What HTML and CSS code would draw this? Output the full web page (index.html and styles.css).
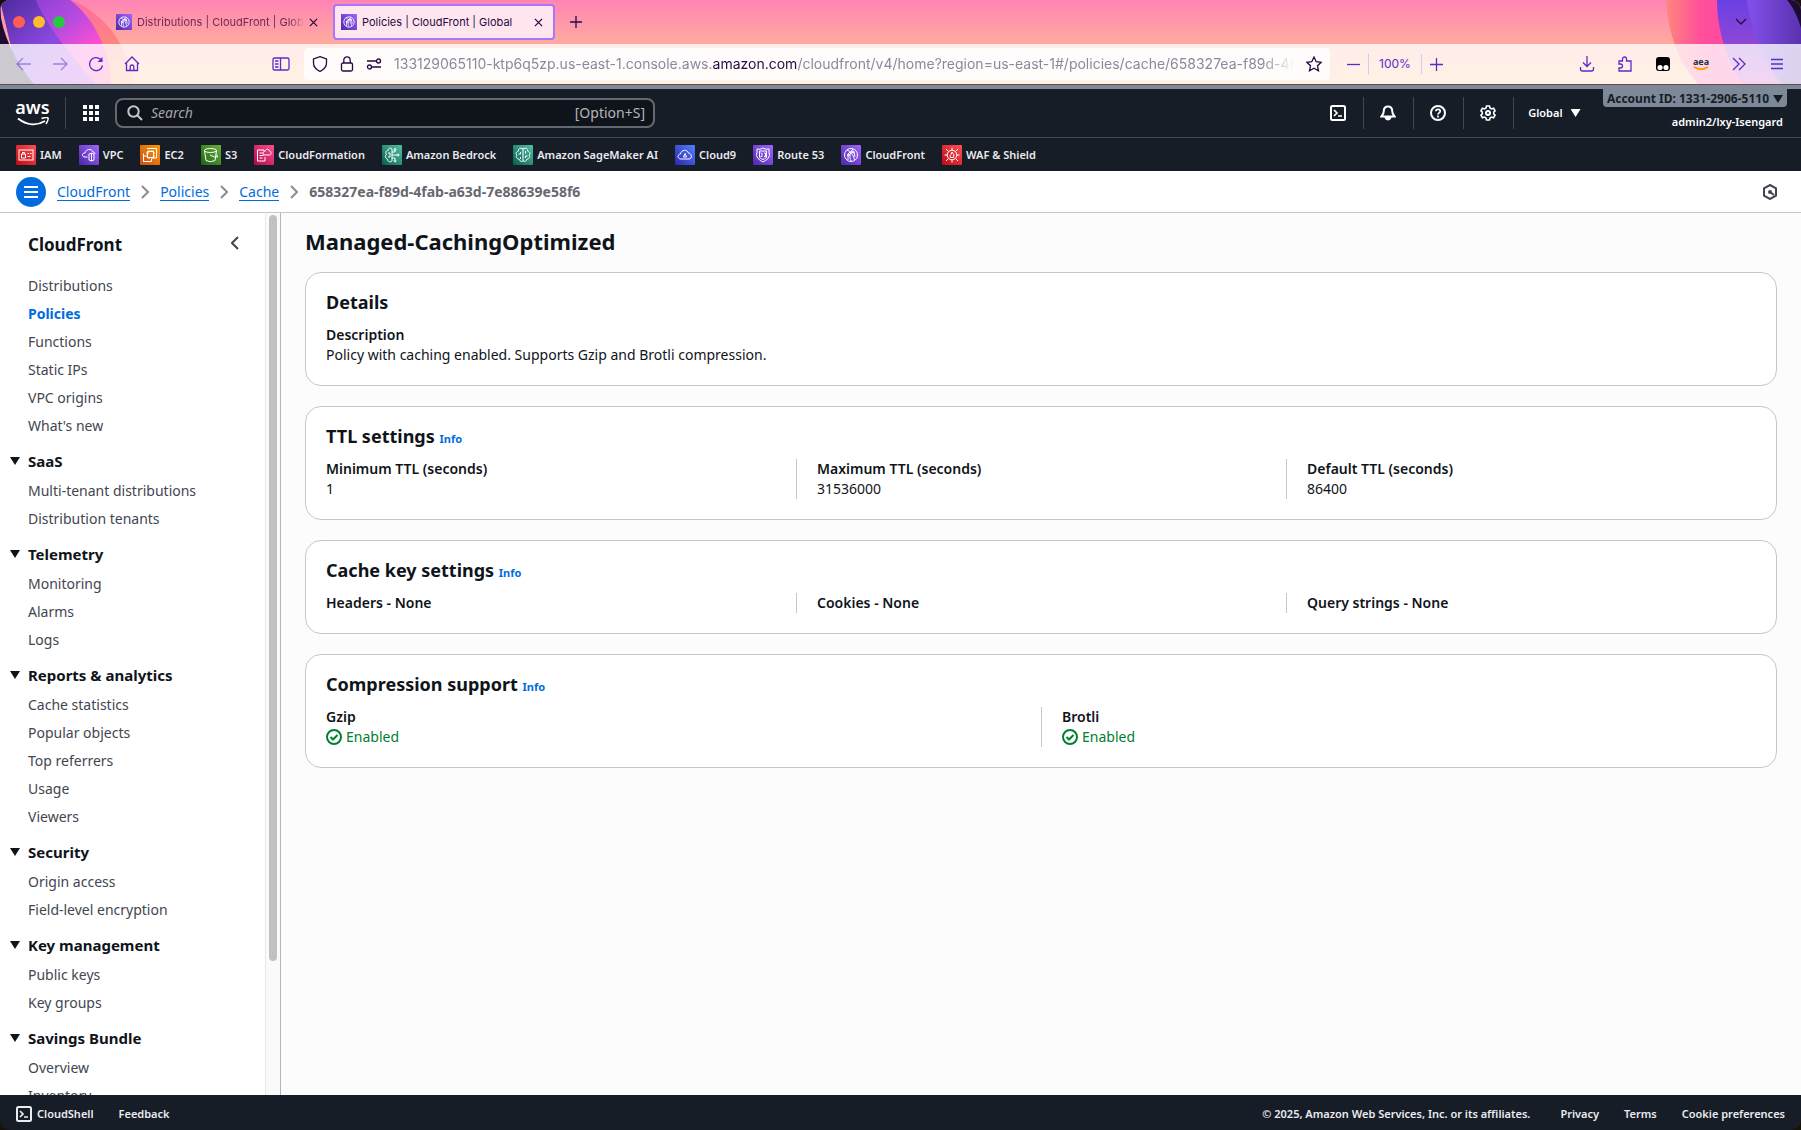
FILE: index.html
```html
<!DOCTYPE html>
<html lang="en">
<head>
    <meta charset="utf-8">
    <title>Policies | CloudFront | Global</title>
    <link rel="stylesheet" href="styles.css">
</head>
<body>

<!-- shared icons -->
<svg class="defs" aria-hidden="true">
    <symbol id="i-cloudfront" viewBox="0 0 20 20">
        <g fill="none" stroke="#fff" stroke-width="1"><circle cx="10" cy="10" r="6.5"/><path d="M6 5c3 1 6 4 7.500 10M7 15V9l2-2M12 4c-3 3-4 8-2 12M9 7h4l1 5"/><circle cx="12" cy="7" r="1"/><circle cx="7.500" cy="10" r="1"/></g>
    </symbol>
    <symbol id="i-close" viewBox="0 0 10 10"><path d="M1 1l8 8M9 1l-8 8" stroke="#250a45" stroke-width="1.400" fill="none"/></symbol>
    <symbol id="i-shell" viewBox="0 0 16 16"><g fill="none" stroke="currentColor" stroke-width="2"><rect x="1" y="1" width="14" height="14" rx="1.500"/><path d="M4 5l3 3-3 3M8 11h4" stroke-width="1.700"/></g></symbol>
    <symbol id="i-chevron" viewBox="0 0 8 14"><path d="M1 1l6 6-6 6" fill="none" stroke="#8c8c94" stroke-width="2"/></symbol>
    <symbol id="i-ok" viewBox="0 0 16 16"><g fill="none" stroke="#00802f" stroke-width="2"><circle cx="8" cy="8" r="7"/><path d="M4.500 8l2.500 2.500 4.500-4.500"/></g></symbol>
</svg>

<div class="window">
    <div class="browser">
        <svg class="theme theme-left" viewBox="0 0 150 84" aria-hidden="true">
            <defs>
                <linearGradient id="g1" x1="0" y1="0" x2="1" y2="1"><stop offset="0" stop-color="#4c2a9c"/><stop offset=".5" stop-color="#8a49e0"/><stop offset="1" stop-color="#c43fe8"/></linearGradient>
                <linearGradient id="g2" x1="0" y1="0" x2="1" y2="1"><stop offset="0" stop-color="#7a3ad0"/><stop offset=".45" stop-color="#b94be0"/><stop offset=".7" stop-color="#ff4fd0"/><stop offset="1" stop-color="#ff5f9a"/></linearGradient>
                <linearGradient id="g3" x1="0" y1="0" x2="0" y2="1"><stop offset="0" stop-color="#ff6aa5"/><stop offset=".6" stop-color="#ff8a78"/><stop offset="1" stop-color="#ffb070"/></linearGradient>
            </defs>
            <path d="M60 0h12c32 14 56 44 62 84H90z" fill="url(#g3)"/>
            <path d="M0 0h70c24 18 40 50 41 84H20z" fill="url(#g2)"/>
            <path d="M0 0h36c8 22 38 60 60 84H20z" fill="url(#g1)"/>
            <path d="M0 0v84h34C20 68 6 44 1 18z" fill="#1c0d30"/>
        </svg>
        <svg class="theme theme-right" viewBox="0 0 150 84" aria-hidden="true">
            <defs>
                <linearGradient id="g4"><stop offset="0" stop-color="#ff867c"/><stop offset=".45" stop-color="#ff4f9c"/><stop offset="1" stop-color="#ff45a2"/></linearGradient>
                <linearGradient id="g5" x1="0" y1="0" x2="0" y2="1"><stop offset="0" stop-color="#6a40e4"/><stop offset=".6" stop-color="#9448d4"/><stop offset="1" stop-color="#c944c8"/></linearGradient>
                <linearGradient id="g6"><stop offset="0" stop-color="#8350ea"/><stop offset="1" stop-color="#5a32b0"/></linearGradient>
            </defs>
            <path d="M15 0c2 32 12 62 32 84h45V0z" fill="url(#g4)"/>
            <path d="M66 0c0 30 10 62 26 84h58V0z" fill="url(#g5)"/>
            <path d="M96 0c4 32 18 62 34 84h20V0z" fill="url(#g6)"/>
            <path d="M136 0c6 7 11 17 14 28V0z" fill="#1c0d30"/>
        </svg>

        <div class="tabs">
            <div class="lights"><span class="light red"></span><span class="light yellow"></span><span class="light green"></span></div>
            <div class="tab">
                <svg class="favicon"><use href="#i-cloudfront"/></svg>
                <span class="tab-title">Distributions | CloudFront | Glob</span>
                <button class="tab-close" aria-label="Close tab"><svg width="9" height="9"><use href="#i-close"/></svg></button>
            </div>
            <div class="tab active">
                <svg class="favicon"><use href="#i-cloudfront"/></svg>
                <span class="tab-title">Policies | CloudFront | Global</span>
                <button class="tab-close" aria-label="Close tab"><svg width="9" height="9"><use href="#i-close"/></svg></button>
            </div>
            <button class="new-tab" aria-label="New tab"><svg width="12" height="12" viewBox="0 0 12 12"><path d="M6 0v12M0 6h12" stroke="#250a45" stroke-width="1.300"/></svg></button>
            <button class="all-tabs" aria-label="List all tabs"><svg width="12" height="8" viewBox="0 0 12 8"><path d="M1 1l5 5 5-5" fill="none" stroke="#250a45" stroke-width="1.300"/></svg></button>
        </div>

        <div class="toolbar">
            <div class="nav-buttons">
                <button class="dim" aria-label="Back"><svg width="16" height="16" viewBox="0 0 16 16"><path d="M15 8H1M7 2L1 8l6 6"/></svg></button>
                <button class="dim" aria-label="Forward"><svg width="16" height="16" viewBox="0 0 16 16"><path d="M1 8h14M9 2l6 6-6 6"/></svg></button>
                <button aria-label="Reload"><svg width="16" height="16" viewBox="0 0 16 16"><path d="M14.500 9.500A6.500 6.500 0 1 1 12.500 3.300L14 5"/><path d="M14.500 1v5h-5z" fill="#5b2bc9" stroke="none"/></svg></button>
                <button aria-label="Home"><svg width="16" height="16" viewBox="0 0 16 16"><path d="M1 8l7-7 7 7M2.500 7v7.500h11V7M6.200 14.500V11q0-2 1.800-2t1.800 2v3.500"/></svg></button>
            </div>
            <button class="reader" aria-label="Sidebar"><svg width="18" height="14" viewBox="0 0 18 14"><rect x="1" y="1" width="16" height="12" rx="1.500"/><path d="M8.500 1v12M3 4h3.500M3 7h3.500M3 10h3.500"/></svg></button>
            <div class="urlbar">
                <svg width="16" height="16" viewBox="0 0 16 16"><path d="M8 .7l6.500 2.300v4c0 4-3.500 7-6.500 8.500C5 14 1.500 11 1.500 7V3z"/></svg>
                <svg width="14" height="16" viewBox="0 0 14 16"><rect x="1.500" y="7" width="11" height="8" rx="1.500"/><path d="M3.800 7V4a3.200 3.200 0 0 1 6.400 0v3"/></svg>
                <svg width="16" height="14" viewBox="0 0 16 14"><path d="M1 4h9M6 10h9"/><circle cx="12.500" cy="4" r="2"/><circle cx="3.500" cy="10" r="2"/></svg>
                <div class="url" role="textbox" aria-label="Address">133129065110-ktp6q5zp.us-east-1.console.aws.<span class="domain">amazon.com</span>/cloudfront/v4/home?region=us-east-1#/policies/cache/658327ea-f89d-4fab-a6</div>
                <button aria-label="Bookmark"><svg width="16" height="16" viewBox="0 0 16 16"><path d="M8 1l2.200 4.700 5 .6-3.700 3.500 1 5L8 12.300l-4.500 2.500 1-5L.8 6.300l5-.6z"/></svg></button>
            </div>
            <div class="zoom">
                <button aria-label="Zoom out"><svg width="13" height="13" viewBox="0 0 13 13"><path d="M0 6.500h13"/></svg></button>
                <span class="zoom-level">100%</span>
                <button aria-label="Zoom in"><svg width="13" height="13" viewBox="0 0 13 13"><path d="M0 6.500h13M6.500 0v13"/></svg></button>
            </div>
            <div class="extensions">
                <button aria-label="Downloads"><svg width="16" height="16" viewBox="0 0 16 16"><path d="M8 0v10M4 6.500l4 4 4-4M1.500 11v2q0 2 2 2h9q2 0 2-2v-2"/></svg></button>
                <button aria-label="Extensions"><svg width="16" height="16" viewBox="0 0 16 16"><path d="M2 8V5h3.500V3a2 2 0 0 1 4 0v2h4.500v10H2v-3h1.500a2 2 0 0 0 0-4z"/></svg></button>
                <button aria-label="Tampermonkey"><svg width="16" height="16" viewBox="0 0 16 16"><rect x="1" y="1" width="14" height="14" rx="3" fill="#000" stroke="none"/><circle cx="5" cy="11.500" r="2.600" fill="#fff" stroke="none"/><circle cx="11" cy="11.500" r="2.600" fill="#fff" stroke="none"/></svg></button>
                <button class="aea" aria-label="AEA"><span>aea</span><svg width="16" height="5" viewBox="0 0 16 5"><path class="smile" d="M1 1q7 4.500 14 0"/></svg></button>
                <button aria-label="More tools"><svg width="14" height="14" viewBox="0 0 14 14"><path d="M1 1l6 6-6 6M7 1l6 6-6 6"/></svg></button>
                <button aria-label="Menu"><svg width="14" height="12" viewBox="0 0 14 12"><path d="M1 1.500h12M1 6h12M1 10.500h12"/></svg></button>
            </div>
        </div>
    </div>

    <header class="aws-header">
        <a class="logo" href="#" aria-label="AWS home">
            <span>aws</span>
            <svg width="32" height="9" viewBox="0 0 32 9"><path d="M1 1.500C10 8.500 20 8.800 28 4" fill="none" stroke="#fff" stroke-width="2"/><path d="M24.500 1.500Q30-.2 31 1q.8 1.500-2 6" fill="none" stroke="#fff" stroke-width="1.500"/></svg>
        </a>
        <button class="services" aria-label="Services"><svg width="16" height="16" viewBox="0 0 16 16" fill="#fff"><path d="M0 0h4v4H0zM6 0h4v4H6zM12 0h4v4h-4zM0 6h4v4H0zM6 6h4v4H6zM12 6h4v4h-4zM0 12h4v4H0zM6 12h4v4H6zM12 12h4v4h-4z"/></svg></button>
        <label class="search">
            <svg width="16" height="16" viewBox="0 0 16 16"><g fill="none" stroke="#c6c6cd" stroke-width="2"><circle cx="6.500" cy="6.500" r="5.200"/><path d="M10.500 10.500l4.500 4.500"/></g></svg>
            <input type="text" placeholder="Search" aria-label="Search">
            <span class="shortcut">[Option+S]</span>
        </label>
        <div class="tools">
            <button aria-label="CloudShell"><svg width="16" height="16"><use href="#i-shell"/></svg></button>
            <button aria-label="Notifications"><svg width="16" height="16" viewBox="0 0 16 16"><path d="M8 1.500c-3 0-4.200 2-4.200 4.500 0 2.700-.8 3.700-2.300 5.500h13c-1.500-1.800-2.300-2.800-2.300-5.500 0-2.500-1.200-4.500-4.200-4.500z"/><path d="M5.500 12.500a2.600 2.600 0 0 0 5 0z" fill="#fff"/></svg></button>
            <button aria-label="Help"><svg width="16" height="16" viewBox="0 0 16 16"><circle cx="8" cy="8" r="7"/><path d="M5.800 6.300C6 3.500 10.200 3.800 10.200 6.200 10.200 8 8 7.700 8 9.500M8 10.500v2" stroke-width="1.700"/></svg></button>
            <button aria-label="Settings"><svg width="16" height="16" viewBox="0 0 16 16"><path d="M6.500 1h3l.5 2 1.600.9 2-.6 1.500 2.500-1.400 1.400v1.600l1.400 1.400-1.500 2.500-2-.6-1.600.9-.5 2h-3L6 13l-1.600-.9-2 .6L.9 10.200l1.400-1.400V7.200L.9 5.800l1.500-2.500 2 .6L6 3z" stroke-width="1.600"/><circle cx="8" cy="8" r="2"/></svg></button>
            <button class="region">Global <span class="caret"></span></button>
        </div>
        <div class="account">
            <button class="account-id">Account ID: 1331-2906-5110 <span class="caret"></span></button>
            <span class="user">admin2/lxy-Isengard</span>
        </div>
    </header>

    <nav class="favorites" aria-label="Favorites">
        <a href="#"><svg class="svc red" viewBox="0 0 20 20"><rect x="3" y="5" width="14" height="10"/><path d="M5.500 9h4v4h-4zM6.500 9V7.500h2V9M11.500 8.500h1.500M14 8.500h1.500M11.500 11.500h3"/></svg>IAM</a>
        <a href="#"><svg class="svc purple" viewBox="0 0 20 20"><path d="M8.500 12H6c-3.500 0-3.500-4 0-4 .5-4 6.500-5 8-1 1.500 0 2 1 2 2M10 9q2.500-1.500 5 0v6q-2.500 2-5 0zM12.500 8.500v7.500"/></svg>VPC</a>
        <a href="#"><svg class="svc orange" viewBox="0 0 20 20"><path d="M8 9V6M7 3.500h9.500V13H13M3.500 11H6M3.500 8.500v8h8V14"/><rect x="7.500" y="6.500" width="6" height="6"/><path d="M9 5v1.500M12 5v1.500M9 12.500V14M12 12.500V14M6 8h1.500M6 11h1.500M13.500 8H15M13.500 11H15"/></svg>EC2</a>
        <a href="#"><svg class="svc green" viewBox="0 0 20 20"><ellipse cx="9.500" cy="5.500" rx="6" ry="2"/><path d="M3.500 5.500l1.500 10q4.500 2.500 9 0l1.500-10M9 10q5 3 7.500 2 .5-1.500-1.500-2.500"/></svg>S3</a>
        <a href="#"><svg class="svc pink" viewBox="0 0 20 20"><path d="M10 6V5H3.500v11H11v-4M5.500 8h3M5.500 10.500h4M5.500 13h3M10 10c-2-2-.5-4 1-3.500.5-3 4-3 4.500-.5 2.500.5 2 4 0 4z"/></svg>CloudFormation</a>
        <a href="#"><svg class="svc teal" viewBox="0 0 20 20"><path d="M10 4v12c-2 2-5 0-4.500-2-2.500-.5-2.500-4-1-4.500C3 8 4 5.500 6 5.500 6 3 9 2.500 10 4zM6 8h2v4H6M10 7h3V5M10 10h5M10 13h3v2"/><circle cx="13" cy="4.500" r="1"/><circle cx="16" cy="10" r="1"/><circle cx="13" cy="16" r="1"/></svg>Amazon Bedrock</a>
        <a href="#"><svg class="svc teal" viewBox="0 0 20 20"><path d="M10 4v12M10 4c3-2 5 0 4.500 2 3 1 3 3 1.500 4 1.500 2 0 4-2 4-1 3-3 2.500-4 2-1 .5-3 1-4-2-2 0-3.500-2-2-4-1.500-1-1.500-3 1.500-4C5 4 7 2 10 4zM5.500 9h2V7M14.500 11h-2v2M12.500 6v2.500M7.500 14v-2"/></svg>Amazon SageMaker AI</a>
        <a href="#"><svg class="svc blue" viewBox="0 0 20 20"><path d="M6 14c-4 0-3.500-5-.5-5 .5-4.500 7-5 8-.8 3.500 0 4 5.800.5 5.800zM10 8.500L8.500 12h3z"/></svg>Cloud9</a>
        <a href="#"><svg class="svc purple" viewBox="0 0 20 20"><path d="M4 4q3 1 6-1 3 2 6 1v3q1.500 4-1 6.500-2 2-5 3.500-3-1.500-5-3.500Q2.500 11 4 7z"/><path d="M6.500 6h7v6.500q-3 2-3.500 2-.5 0-3.500-2zM8.500 8H7.500M9 8v3.500H7.500M11 8h1.500v3.500H11"/></svg>Route 53</a>
        <a href="#"><svg class="svc purple"><use href="#i-cloudfront"/></svg>CloudFront</a>
        <a href="#"><svg class="svc red" viewBox="0 0 20 20"><circle cx="10" cy="10" r="4.800"/><path d="M10 2.500v3M10 14.500v3M2.500 10h3M14.500 10h3M4 4l2.500 2.500M16 4l-2.500 2.500M4 16l2.500-2.500M16 16l-2.500-2.500M10 7q3 3 1.500 5.500h-3Q7.500 10 9 9.500z"/></svg>WAF &amp; Shield</a>
    </nav>

    <div class="breadcrumbs">
        <button class="menu-toggle" aria-label="Open navigation"><svg width="14" height="14" viewBox="0 0 14 14"><path d="M0 2h14M0 7h14M0 12h14" stroke="#fff" stroke-width="2"/></svg></button>
        <a href="#">CloudFront</a>
        <svg class="sep"><use href="#i-chevron"/></svg>
        <a href="#">Policies</a>
        <svg class="sep"><use href="#i-chevron"/></svg>
        <a href="#">Cache</a>
        <svg class="sep"><use href="#i-chevron"/></svg>
        <span class="current">658327ea-f89d-4fab-a63d-7e88639e58f6</span>
        <button class="assistant" aria-label="Assistant"><svg width="16" height="16" viewBox="0 0 16 16"><path d="M8 1l6 3.300v7.400L8 15l-6-3.300V4.300z" fill="none" stroke="#424650" stroke-width="2"/><path d="M8 8l4 3" stroke="#424650" stroke-width="2"/><circle cx="8" cy="8" r="2" fill="#424650"/></svg></button>
    </div>

    <div class="content">
        <aside class="sidebar">
            <div class="sidebar-scroll">
                <div class="sidebar-head">
                    <h2>CloudFront</h2>
                    <button aria-label="Close navigation"><svg width="8" height="14" viewBox="0 0 8 14"><path d="M7 1L1 7l6 6" fill="none" stroke="#424650" stroke-width="2"/></svg></button>
                </div>
                <ul>
                    <li><a href="#">Distributions</a></li>
                    <li><a href="#" class="selected">Policies</a></li>
                    <li><a href="#">Functions</a></li>
                    <li><a href="#">Static IPs</a></li>
                    <li><a href="#">VPC origins</a></li>
                    <li><a href="#">What's new</a></li>
                </ul>
                <button class="section"><span class="caret"></span>SaaS</button>
                <ul>
                    <li><a href="#">Multi-tenant distributions</a></li>
                    <li><a href="#">Distribution tenants</a></li>
                </ul>
                <button class="section"><span class="caret"></span>Telemetry</button>
                <ul>
                    <li><a href="#">Monitoring</a></li>
                    <li><a href="#">Alarms</a></li>
                    <li><a href="#">Logs</a></li>
                </ul>
                <button class="section"><span class="caret"></span>Reports &amp; analytics</button>
                <ul>
                    <li><a href="#">Cache statistics</a></li>
                    <li><a href="#">Popular objects</a></li>
                    <li><a href="#">Top referrers</a></li>
                    <li><a href="#">Usage</a></li>
                    <li><a href="#">Viewers</a></li>
                </ul>
                <button class="section"><span class="caret"></span>Security</button>
                <ul>
                    <li><a href="#">Origin access</a></li>
                    <li><a href="#">Field-level encryption</a></li>
                </ul>
                <button class="section"><span class="caret"></span>Key management</button>
                <ul>
                    <li><a href="#">Public keys</a></li>
                    <li><a href="#">Key groups</a></li>
                </ul>
                <button class="section"><span class="caret"></span>Savings Bundle</button>
                <ul>
                    <li><a href="#">Overview</a></li>
                    <li><a href="#">Inventory</a></li>
                </ul>
            </div>
            <div class="scrollbar"><div class="thumb"></div></div>
        </aside>

        <main>
            <h1>Managed-CachingOptimized</h1>

            <section class="card">
                <h2>Details</h2>
                <dl class="columns">
                    <div><dt>Description</dt><dd>Policy with caching enabled. Supports Gzip and Brotli compression.</dd></div>
                </dl>
            </section>

            <section class="card">
                <h2>TTL settings <a href="#">Info</a></h2>
                <dl class="columns three">
                    <div><dt>Minimum TTL (seconds)</dt><dd>1</dd></div>
                    <div><dt>Maximum TTL (seconds)</dt><dd>31536000</dd></div>
                    <div><dt>Default TTL (seconds)</dt><dd>86400</dd></div>
                </dl>
            </section>

            <section class="card">
                <h2>Cache key settings <a href="#">Info</a></h2>
                <dl class="columns three">
                    <div><dt>Headers - None</dt></div>
                    <div><dt>Cookies - None</dt></div>
                    <div><dt>Query strings - None</dt></div>
                </dl>
            </section>

            <section class="card">
                <h2>Compression support <a href="#">Info</a></h2>
                <dl class="columns two">
                    <div><dt>Gzip</dt><dd class="enabled"><svg width="16" height="16"><use href="#i-ok"/></svg>Enabled</dd></div>
                    <div><dt>Brotli</dt><dd class="enabled"><svg width="16" height="16"><use href="#i-ok"/></svg>Enabled</dd></div>
                </dl>
            </section>
        </main>
    </div>

    <footer>
        <button class="cloudshell"><svg width="16" height="16"><use href="#i-shell"/></svg>CloudShell</button>
        <a href="#">Feedback</a>
        <span class="copyright">© 2025, Amazon Web Services, Inc. or its affiliates.</span>
        <a href="#">Privacy</a>
        <a href="#">Terms</a>
        <a href="#">Cookie preferences</a>
    </footer>
</div>

</body>
</html>
```
FILE: styles.css
```css
* {
    box-sizing: border-box;
}
body {
    margin: 0;
    background: #17110a;
    font-family: "Noto Sans", "Open Sans", sans-serif;
    font-size: 14px;
    line-height: 20px;
    color: #0f141a;
}
button {
    font: inherit;
    color: inherit;
    background: none;
    border: none;
    padding: 0;
    display: flex;
    align-items: center;
    justify-content: center;
    cursor: pointer;
}
a {
    color: inherit;
    text-decoration: none;
}
ul {
    list-style: none;
    margin: 0;
    padding: 0;
}
h1, h2, dl, dd {
    margin: 0;
}
svg {
    display: block;
    flex: none;
}
.defs {
    position: absolute;
    width: 0;
    height: 0;
}
.window {
    display: flex;
    flex-direction: column;
    height: 100vh;
    border-radius: 10px;
    overflow: hidden;
}
.caret {
    width: 10px;
    height: 8px;
    background: currentColor;
    clip-path: polygon(0 0, 100% 0, 50% 100%);
    flex: none;
}

/* browser chrome */
.browser {
    position: relative;
    flex: none;
    font-family: Inter, sans-serif;
    color: #250a45;
    background: linear-gradient(#ff84b4, #ffab9f 44px, #ffc088 84px);
    border-bottom: 1px solid #6b4a46;
}
.theme {
    position: absolute;
    top: 0;
    width: 150px;
    height: 84px;
}
.theme-left {
    left: 0;
}
.theme-right {
    right: 0;
}
.tabs {
    position: relative;
    display: flex;
    align-items: center;
    height: 44px;
    padding: 0 54px 0 13px;
}
.lights {
    display: flex;
    gap: 8px;
    width: 94px;
}
.light {
    width: 12px;
    height: 12px;
    border-radius: 50%;
}
.red {
    background: #ff5f57;
}
.yellow {
    background: #febc2e;
}
.green {
    background: #28c840;
}
.tab {
    display: flex;
    align-items: center;
    width: 222px;
    height: 36px;
    padding: 0 7px 0 8px;
    margin-right: 4px;
    font-size: 11px;
    color: #6d2b52;
    border: 1px solid transparent;
    border-radius: 4px;
}
.tab.active {
    color: #250a45;
    background: #ffe6ee;
    border: 2px solid #a974ff;
    padding: 0 7px 0 6px;
}
.favicon {
    width: 16px;
    height: 16px;
    margin-right: 5px;
    background: linear-gradient(45deg, #4d27aa, #a166ff);
}
.tab-title {
    flex: 1;
    overflow: hidden;
    white-space: nowrap;
}
.tab:not(.active) .tab-title {
    mask-image: linear-gradient(to left, transparent, #000 16px);
}
.tab-close {
    width: 16px;
    height: 18px;
}
.new-tab {
    width: 34px;
    height: 34px;
}
.all-tabs {
    margin-left: auto;
}
.toolbar {
    position: relative;
    display: flex;
    align-items: center;
    height: 40px;
    padding: 0 16px;
    background: rgba(255, 255, 255, 0.78);
}
.toolbar svg {
    fill: none;
    stroke: #5b2bc9;
    stroke-width: 1.3;
}
.nav-buttons {
    display: flex;
    gap: 20px;
}
.dim {
    opacity: 0.5;
}
.reader {
    margin: 0 14px 0 auto;
}
.urlbar {
    flex: none;
    display: flex;
    align-items: center;
    gap: 12px;
    width: 58%;
    height: 32px;
    padding: 0 8px;
    background: rgba(255, 255, 255, 0.8);
    border-radius: 4px;
}
.urlbar svg {
    stroke: #250a45;
}
.url {
    flex: 1;
    overflow: hidden;
    white-space: nowrap;
    color: #8f86a0;
    mask-image: linear-gradient(to left, transparent, #000 32px);
}
.domain {
    color: #250a45;
}
.zoom {
    display: flex;
    align-items: center;
    margin: 0 auto 0 17px;
    color: #5b2bc9;
}
.zoom-level {
    margin: 0 8px;
    padding: 0 10px;
    font-size: 12px;
    border: solid #d9c9ee;
    border-width: 0 1px;
}
.extensions {
    display: flex;
    align-items: center;
    gap: 22px;
    margin-left: 4px;
}
.extensions button {
    width: 16px;
}
.extensions .aea {
    flex-direction: column;
    font: bold 9px/9px "Noto Sans", sans-serif;
    color: #232f3e;
}
.toolbar .smile {
    stroke: #ff9900;
    stroke-width: 2;
}

/* aws header */
.aws-header {
    flex: none;
    display: flex;
    align-items: center;
    height: 53px;
    padding: 0 14px 0 16px;
    color: #fff;
    background: #161d26;
    border-top: 4px solid #7d8998;
    border-bottom: 1px solid #424650;
    font-size: 11px;
    font-weight: 600;
}
.logo {
    display: flex;
    flex-direction: column;
    align-items: center;
    width: 50px;
    height: 32px;
    padding-right: 16px;
    border-right: 1px solid #424650;
    font-size: 18px;
    line-height: 20px;
}
.services {
    width: 49px;
}
.search {
    display: flex;
    align-items: center;
    gap: 8px;
    width: 540px;
    height: 30px;
    padding: 0 8px 0 10px;
    background: #0f141a;
    border: 2px solid #656871;
    border-radius: 8px;
    font-size: 14px;
    font-weight: 400;
}
.search input {
    flex: 1;
    min-width: 0;
    padding: 0;
    font: inherit;
    color: #fff;
    background: none;
    border: none;
    outline: none;
}
.search input::placeholder {
    color: #a4a4ad;
    font-style: italic;
    opacity: 1;
}
.shortcut {
    color: #b4b4bb;
}
.tools {
    display: flex;
    margin-left: auto;
}
.tools button {
    width: 50px;
    height: 32px;
    border-right: 1px solid #424650;
}
.tools svg {
    fill: none;
    stroke: #fff;
    stroke-width: 2;
}
.tools .region {
    width: 89px;
    gap: 8px;
    padding-right: 8px;
    border: none;
}
.account {
    display: flex;
    flex-direction: column;
    align-items: flex-end;
    align-self: flex-start;
}
.account-id {
    gap: 4px;
    height: 18px;
    padding: 2px 4px 0;
    color: #161d26;
    background: #7d8998;
    border-radius: 0 0 4px 4px;
    font-size: 12px;
    font-weight: 700;
}
.user {
    margin: 5px 4px 0 0;
    line-height: 20px;
}

/* favorites */
.favorites {
    flex: none;
    display: flex;
    align-items: center;
    gap: 17px;
    height: 33px;
    padding: 0 16px;
    color: #ebebf0;
    background: #161d26;
    font-size: 11px;
    font-weight: 600;
}
.favorites a {
    display: flex;
    align-items: center;
    gap: 4px;
    white-space: nowrap;
}
.svc {
    width: 20px;
    height: 20px;
    border-radius: 1px;
    fill: none;
    stroke: #fff;
    stroke-width: 1;
}
.svc.red {
    background: linear-gradient(45deg, #bd0816, #ff5252);
}
.svc.purple {
    background: linear-gradient(45deg, #4d27aa, #a166ff);
}
.svc.orange {
    background: linear-gradient(45deg, #c8511b, #ff9900);
}
.svc.green {
    background: linear-gradient(45deg, #1b660f, #6cae3e);
}
.svc.pink {
    background: linear-gradient(45deg, #b0084d, #ff4f8b);
}
.svc.teal {
    background: linear-gradient(45deg, #055f4e, #56c0a7);
}
.svc.blue {
    background: linear-gradient(45deg, #2e27ad, #527fff);
}

/* breadcrumbs */
.breadcrumbs {
    flex: none;
    display: flex;
    align-items: center;
    gap: 11px;
    height: 42px;
    padding: 0 23px 0 16px;
    background: #fff;
    border-bottom: 1px solid #c6c6cd;
}
.menu-toggle {
    width: 30px;
    height: 30px;
    border-radius: 50%;
    background: #006ce0;
}
.breadcrumbs a {
    color: #006ce0;
    border-bottom: 1px solid #006ce0;
    line-height: 17px;
}
.sep {
    width: 8px;
    height: 14px;
}
.current {
    color: #656871;
    font-weight: 700;
}
.assistant {
    margin-left: auto;
}

/* side navigation */
.content {
    flex: 1;
    min-height: 0;
    display: flex;
    background: #fcfcfd;
}
.sidebar {
    flex: none;
    display: flex;
    width: 281px;
    background: #fff;
    border-right: 1px solid #b4b4bb;
}
.sidebar-scroll {
    flex: 1;
    overflow: hidden;
    padding: 20px 26px 0 10px;
}
.sidebar-head {
    display: flex;
    justify-content: space-between;
    align-items: flex-start;
    padding-left: 18px;
    margin-bottom: 15px;
}
.sidebar-head h2 {
    font-size: 17px;
    line-height: 24px;
}
.sidebar-head button {
    height: 20px;
}
.sidebar li {
    padding: 4px 0 4px 18px;
    color: #424650;
}
.sidebar .selected {
    color: #006ce0;
    font-weight: 700;
}
.section {
    gap: 8px;
    margin: 11px 0 6px;
    font-size: 15px;
    font-weight: 700;
}
.scrollbar {
    width: 15px;
    padding: 2px 3px;
    background: #fafafa;
    border-left: 1px solid #e8e8e8;
}
.thumb {
    height: 85%;
    border-radius: 4px;
    background: #c1c1c1;
}

/* policy page */
main {
    flex: 1;
    padding: 13px 24px;
}
h1 {
    margin-bottom: 16px;
    font-size: 22px;
    line-height: 30px;
    font-weight: 700;
}
.card {
    margin-bottom: 20px;
    padding: 17px 20px 20px;
    background: #fff;
    border: 1px solid #c6c6cd;
    border-radius: 16px;
}
.card h2 {
    margin-bottom: 11px;
    font-size: 18px;
    line-height: 24px;
    font-weight: 700;
}
.card h2 a {
    font-size: 11px;
    line-height: 12px;
    color: #006ce0;
}
.columns {
    display: grid;
    margin: 0 -20px;
}
.columns div {
    padding: 0 20px;
    border-left: 1px solid #c6c6cd;
}
.columns div:first-child {
    border-left: none;
}
.three {
    grid-template-columns: repeat(3, 1fr);
}
.two {
    grid-template-columns: repeat(2, 1fr);
}
dt {
    font-weight: 600;
}
.enabled {
    display: flex;
    align-items: center;
    gap: 4px;
    color: #00802f;
}

footer {
    flex: none;
    display: flex;
    align-items: center;
    gap: 25px;
    height: 35px;
    padding: 2px 16px 0;
    color: #ebebf0;
    background: #161d26;
    font-size: 11px;
    font-weight: 600;
}
.cloudshell {
    gap: 5px;
}
.copyright {
    margin: 0 5px 0 auto;
}
```
